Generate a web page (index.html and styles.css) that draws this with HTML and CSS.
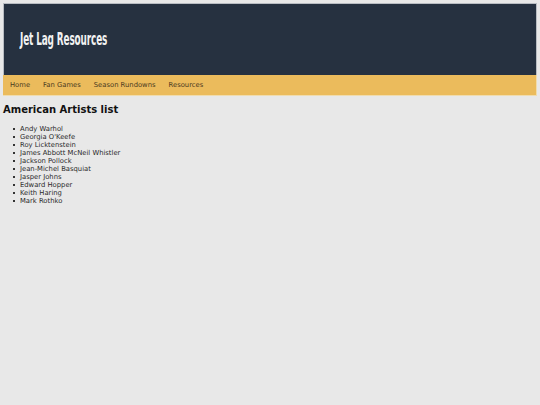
FILE: index.html
```html
<!DOCTYPE html>
<html>
<head>
<meta charset="utf-8">
<link rel="stylesheet" href="styles.css">
</head>
<body>
<header class="site-header">
  <h1 class="site-title">Jet Lag Resources</h1>
</header>
<nav class="site-nav">
  <a href="#">Home</a>
  <a href="#">Fan Games</a>
  <a href="#">Season Rundowns</a>
  <a href="#">Resources</a>
</nav>
<main class="content">
  <h2 class="page-title">American Artists list</h2>
  <ul class="artist-list">
    <li>Andy Warhol</li>
    <li>Georgia O'Keefe</li>
    <li>Roy Licktenstein</li>
    <li>James Abbott McNeil Whistler</li>
    <li>Jackson Pollock</li>
    <li>Jean-Michel Basquiat</li>
    <li>Jasper Johns</li>
    <li>Edward Hopper</li>
    <li>Keith Haring</li>
    <li>Mark Rothko</li>
  </ul>
</main>
</body>
</html>
```
FILE: styles.css
```css
html, body {
  margin: 0;
  padding: 0;
  background: #e8e8e8;
}
body {
  padding: 3px 3px;
  font-family: "DejaVu Sans", Verdana, sans-serif;
  color: #222;
}
.site-header {
  background: #263140;
  height: 72px;
  border: 1px solid #b8bcc2;
  border-bottom: none;
  display: flex;
  align-items: center;
  padding-left: 16px;
  padding-bottom: 2px;
  box-sizing: border-box;
}
.site-title {
  margin: 0;
  display: inline-block;
  font-family: "DejaVu Sans Condensed", "DejaVu Sans", sans-serif;
  font-stretch: condensed;
  font-weight: bold;
  font-size: 17px;
  color: #f2f2f2;
  letter-spacing: -0.2px;
  transform: scaleX(0.58);
  transform-origin: left center;
}
.site-nav {
  background: #ebbb5c;
  height: 20px;
  display: flex;
  align-items: center;
  border-right: 1px solid #f0dcae;
  border-bottom: 1px solid #f0dcae;
}
.site-nav a {
  font-size: 6.8px;
  color: #4a3a20;
  text-decoration: none;
  padding: 0 6.5px;
}
.site-nav a:first-child {
  padding-left: 7px;
}
.page-title {
  margin: 8px 0 10px 0;
  font-size: 10px;
  font-weight: bold;
  color: #111;
}
.artist-list {
  margin: 0;
  padding-left: 10px;
  list-style: none;
  font-size: 6.8px;
  line-height: 8px;
  color: #2a2a2a;
}
.artist-list li {
  display: flex;
  align-items: center;
  gap: 5px;
}
.artist-list li::before {
  content: "";
  width: 2px;
  height: 2px;
  background: #333;
  flex: none;
}
```
